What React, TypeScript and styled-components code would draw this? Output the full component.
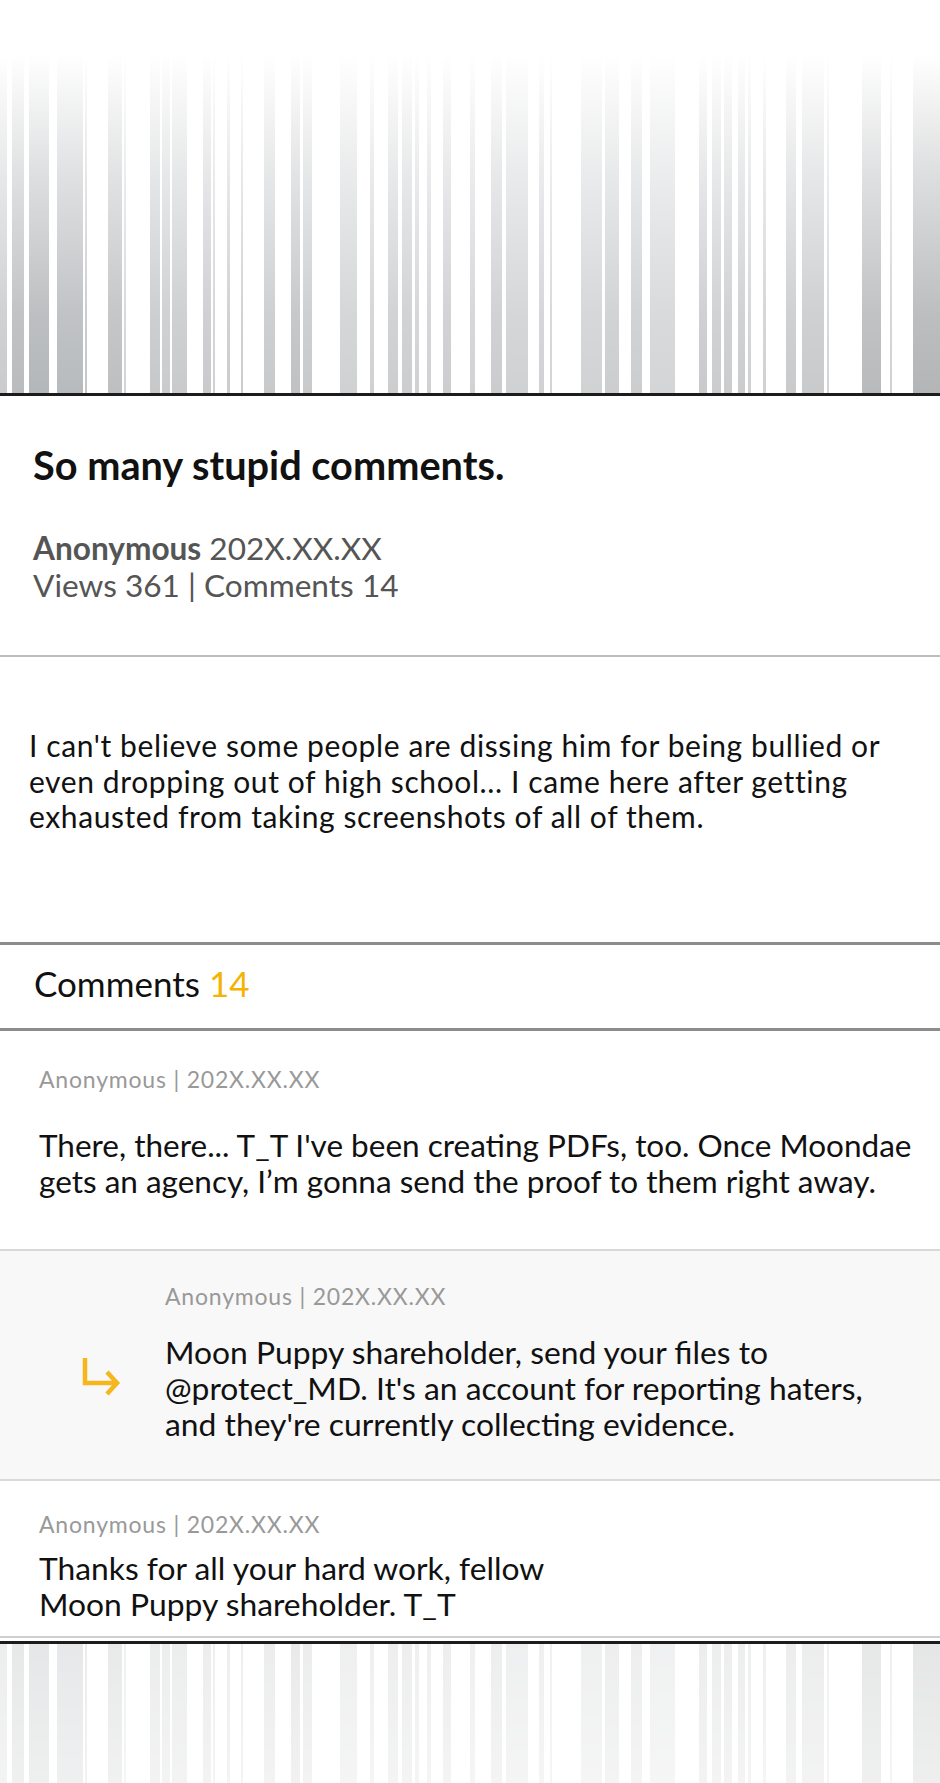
import styled, { createGlobalStyle } from "styled-components";

type Stripe = [number, number, string];

const STRIPES: Stripe[] = [
  [0, 7, "#c9cbcd"],
  [12, 12, "#b9bbbd"],
  [29, 20, "#b4b7b9"],
  [57, 26, "#b8bbbe"],
  [85, 2, "#c4c6c8"],
  [108, 14, "#bdbfc1"],
  [124, 2, "#d2d4d6"],
  [150, 10, "#c6c8ca"],
  [162, 8, "#c9cbcd"],
  [172, 15, "#c8cacc"],
  [203, 8, "#c8cacc"],
  [213, 2, "#ced0d2"],
  [227, 3, "#cacccd"],
  [241, 2, "#cacccd"],
  [264, 11, "#c7c9cb"],
  [291, 9, "#bfc1c3"],
  [303, 9, "#c7c9cb"],
  [340, 17, "#cfd1d3"],
  [370, 4, "#cfd1d3"],
  [388, 10, "#cbcdcf"],
  [402, 10, "#cbcdcf"],
  [415, 4, "#cfd1d3"],
  [427, 4, "#cfd1d3"],
  [443, 8, "#cbcdcf"],
  [470, 5, "#d0d2d4"],
  [491, 11, "#caccce"],
  [506, 22, "#cfd1d3"],
  [539, 5, "#cfd1d3"],
  [550, 2, "#d2d4d6"],
  [581, 21, "#d0d2d4"],
  [605, 14, "#cbcdcf"],
  [631, 11, "#cbcdcf"],
  [650, 25, "#d3d5d7"],
  [699, 8, "#c8cacc"],
  [712, 9, "#caccce"],
  [724, 8, "#caccce"],
  [738, 7, "#caccce"],
  [748, 3, "#cfd1d3"],
  [763, 3, "#cfd1d3"],
  [786, 10, "#c8cacc"],
  [802, 22, "#c8cacc"],
  [827, 2, "#d2d4d6"],
  [862, 19, "#b8babc"],
  [890, 2, "#cfd1d3"],
  [913, 27, "#b3b5b7"],
];

type Comment = {
  id: number;
  author: string;
  date: string;
  lines: string[];
  reply?: boolean;
  top: number;
  gap: number;
  bottom: number;
  lineHeight: number;
  size: number;
};

const POST_LINES = [
  "I can't believe some people are dissing him for being bullied or",
  "even dropping out of high school... I came here after getting",
  "exhausted from taking screenshots of all of them.",
];

const COMMENTS: Comment[] = [
  {
    id: 1,
    author: "Anonymous",
    date: "202X.XX.XX",
    lines: [
      "There, there... T_T I've been creating PDFs, too. Once Moondae",
      "gets an agency, I’m gonna send the proof to them right away.",
    ],
    top: 35,
    gap: 35,
    bottom: 50,
    lineHeight: 36,
    size: 31.5,
  },
  {
    id: 2,
    author: "Anonymous",
    date: "202X.XX.XX",
    lines: [
      "Moon Puppy shareholder, send your files to",
      "@protect_MD. It's an account for reporting haters,",
      "and they're currently collecting evidence.",
    ],
    reply: true,
    top: 32,
    gap: 25,
    bottom: 37,
    lineHeight: 36,
    size: 31.8,
  },
  {
    id: 3,
    author: "Anonymous",
    date: "202X.XX.XX",
    lines: ["Thanks for all your hard work, fellow", "Moon Puppy shareholder. T_T"],
    top: 30,
    gap: 13,
    bottom: 13,
    lineHeight: 36.5,
    size: 31.8,
  },
];

const Lines = ({ lines }: { lines: string[] }) => (
  <>
    {lines.map((line, i) => (
      <span key={i}>
        {i > 0 && <br />}
        {line}
      </span>
    ))}
  </>
);

const Barcode = ({ variant }: { variant: "top" | "bottom" }) => {
  const height = variant === "top" ? 393 : 139;
  const gradId = `fade-${variant}`;

  return (
    <svg
      width="940"
      height={height}
      viewBox={`0 0 940 ${height}`}
      preserveAspectRatio="none"
      style={{ display: "block" }}
    >
      <defs>
        {variant === "top" ? (
          <linearGradient id={gradId} x1="0" y1="0" x2="0" y2="1">
            <stop offset="0" stopColor="#fff" stopOpacity="1" />
            <stop offset="0.14" stopColor="#fff" stopOpacity="1" />
            <stop offset="0.45" stopColor="#fff" stopOpacity="0.55" />
            <stop offset="0.8" stopColor="#fff" stopOpacity="0.12" />
            <stop offset="1" stopColor="#fff" stopOpacity="0" />
          </linearGradient>
        ) : (
          <linearGradient id={gradId} x1="0" y1="0" x2="0" y2="1">
            <stop offset="0" stopColor="#fff" stopOpacity="0.66" />
            <stop offset="1" stopColor="#fff" stopOpacity="0.78" />
          </linearGradient>
        )}
      </defs>
      {STRIPES.map(([x, w, color]) => (
        <rect key={x} x={x} y={0} width={w} height={height} fill={color} />
      ))}
      <rect x={0} y={0} width={940} height={height} fill={`url(#${gradId})`} />
    </svg>
  );
};

const ReplyArrow = () => (
  <svg width="40" height="42" viewBox="0 0 40 42">
    <path
      d="M4 2 V27 H36 M26 16 L36 27 L26 38"
      fill="none"
      stroke="#f5b61e"
      strokeWidth="4.5"
    />
  </svg>
);

export default function App() {
  return (
    <>
      <GlobalStyle />
      <Page>
        <TopBanner>
          <Barcode variant="top" />
        </TopBanner>

        <PostHeader>
          <PostTitle>So many stupid comments.</PostTitle>
          <PostMeta>
            <MetaAuthor>Anonymous</MetaAuthor> 202X.XX.XX
            <br />
            Views 361 | Comments 14
          </PostMeta>
        </PostHeader>

        <PostBody>
          <Lines lines={POST_LINES} />
        </PostBody>

        <CommentsHeader>
          Comments <CommentCount>14</CommentCount>
        </CommentsHeader>

        <CommentList>
          {COMMENTS.map((c) => (
            <CommentItem
              key={c.id}
              $reply={!!c.reply}
              $top={c.top}
              $bottom={c.bottom}
            >
              <CommentMeta>
                {c.author} | {c.date}
              </CommentMeta>
              {c.reply && (
                <ArrowCell>
                  <ReplyArrow />
                </ArrowCell>
              )}
              <CommentText
                $gap={c.gap}
                $lineHeight={c.lineHeight}
                $size={c.size}
              >
                <Lines lines={c.lines} />
              </CommentText>
            </CommentItem>
          ))}
        </CommentList>

        <BottomBanner>
          <Barcode variant="bottom" />
        </BottomBanner>
      </Page>
    </>
  );
}

const GlobalStyle = createGlobalStyle`
  html, body {
    margin: 0;
    padding: 0;
    background: #fff;
  }

  body {
    font-family: Lato, "Open Sans", "Liberation Sans", sans-serif;
    color: #111;
  }
`;

const Page = styled.div`
  width: 940px;
  background: #fff;
`;

const TopBanner = styled.div`
  border-bottom: 3px solid #1c1c1c;
`;

const BottomBanner = styled.div`
  margin-top: 3px;
  border-top: 3px solid #1c1c1c;
  height: 139px;
  overflow: hidden;
`;

const PostHeader = styled.header`
  padding: 46px 33px 51px;
  border-bottom: 2px solid #bdbdbd;
`;

const PostTitle = styled.h1`
  margin: 0 0 42px;
  font-size: 39.7px;
  line-height: 46px;
  font-weight: 700;
  color: #111;
`;

const PostMeta = styled.div`
  font-size: 31.6px;
  line-height: 37px;
  color: #555;
`;

const MetaAuthor = styled.span`
  font-weight: 700;
`;

const PostBody = styled.p`
  margin: 0;
  padding: 71px 0 107px 29px;
  font-size: 30px;
  letter-spacing: 0.6px;
  line-height: 35.5px;
  white-space: nowrap;
  color: #111;
  border-bottom: 3px solid #8c8c8c;
`;

const CommentsHeader = styled.h2`
  margin: 0;
  padding: 18px 34px 25px;
  font-size: 35px;
  line-height: 40px;
  font-weight: 400;
  color: #111;
  border-bottom: 3px solid #8c8c8c;
`;

const CommentCount = styled.span`
  color: #f5b301;
`;

const CommentList = styled.div`
  display: flex;
  flex-direction: column;
`;

const CommentItem = styled.article<{
  $reply: boolean;
  $top: number;
  $bottom: number;
}>`
  display: grid;
  grid-template-columns: ${(p) => (p.$reply ? "165px 1fr" : "39px 1fr")};
  padding: ${(p) => `${p.$top}px 0 ${p.$bottom}px 0`};
  background: ${(p) => (p.$reply ? "#f8f8f8" : "#fff")};
  border-bottom: 2px solid #d9d9d9;

  &:last-child {
    border-bottom-color: #cfcfcf;
  }
`;

const CommentMeta = styled.div`
  grid-column: 2;
  font-size: 23px;
  letter-spacing: 0.8px;
  line-height: 26px;
  color: #999;
`;

const ArrowCell = styled.div`
  grid-column: 1;
  grid-row: 2;
  align-self: center;
  margin: 4px 0 0 81px;
  line-height: 0;
`;

const CommentText = styled.p<{
  $gap: number;
  $lineHeight: number;
  $size: number;
}>`
  grid-column: 2;
  grid-row: 2;
  margin: ${(p) => p.$gap}px 0 0;
  font-size: ${(p) => p.$size}px;
  line-height: ${(p) => p.$lineHeight}px;
  white-space: nowrap;
  color: #111;
`;
